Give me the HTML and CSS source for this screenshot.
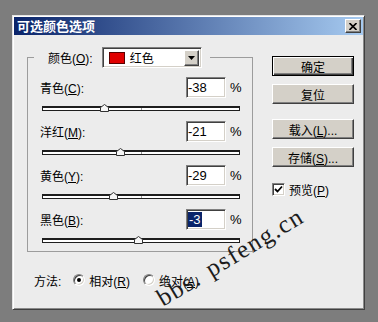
FILE: index.html
```html
<!DOCTYPE html>
<html lang="zh-CN">
<head>
    <meta charset="UTF-8">
    <meta name="viewport" content="width=device-width, initial-scale=1.0">
    <title>可选颜色选项</title>
    <link rel="stylesheet" href="styles.css">
</head>
<body>
    <div class="dialog">
        <div class="titlebar">
            <span class="title">可选颜色选项</span>
            <button class="close-btn">
                <svg width="8" height="7" viewBox="0 0 8 7"><path d="M0.5 0 L7.5 7 M7.5 0 L0.5 7" stroke="#000" stroke-width="1.6" fill="none"/></svg>
            </button>
        </div>

        <div class="dialog-body">
            <div class="left-col">
                <fieldset class="group">
                    <legend class="group-head">
                        <div class="head-inner">
                            <span class="label">颜色(<u>O</u>):</span>
                            <div class="dropdown">
                                <span class="swatch"></span>
                                <span class="dropdown-text">红色</span>
                                <span class="dropdown-arrow">
                                    <svg width="7" height="4" viewBox="0 0 7 4"><path d="M0 0 H7 L3.5 4 Z" fill="#000"/></svg>
                                </span>
                            </div>
                        </div>
                    </legend>

                    <div class="params">
                        <div class="param">
                            <div class="param-row">
                                <span class="label">青色(<u>C</u>):</span>
                                <span class="value-box">-38</span>
                                <span class="pct">%</span>
                            </div>
                            <div class="slider">
                                <div class="track">
                                    <span class="zero"></span>
                                    <span class="thumb" style="left: 31%"><svg width="9" height="8" viewBox="0 0 9 8"><path d="M0.5 7.5 V3.5 L4.5 0.5 L8.5 3.5 V7.5 Z" fill="#f6f6f6" stroke="#333"/></svg></span>
                                </div>
                            </div>
                        </div>
                        <div class="param">
                            <div class="param-row">
                                <span class="label">洋红(<u>M</u>):</span>
                                <span class="value-box">-21</span>
                                <span class="pct">%</span>
                            </div>
                            <div class="slider">
                                <div class="track">
                                    <span class="zero"></span>
                                    <span class="thumb" style="left: 39.5%"><svg width="9" height="8" viewBox="0 0 9 8"><path d="M0.5 7.5 V3.5 L4.5 0.5 L8.5 3.5 V7.5 Z" fill="#f6f6f6" stroke="#333"/></svg></span>
                                </div>
                            </div>
                        </div>
                        <div class="param">
                            <div class="param-row">
                                <span class="label">黄色(<u>Y</u>):</span>
                                <span class="value-box">-29</span>
                                <span class="pct">%</span>
                            </div>
                            <div class="slider">
                                <div class="track">
                                    <span class="zero"></span>
                                    <span class="thumb" style="left: 35.5%"><svg width="9" height="8" viewBox="0 0 9 8"><path d="M0.5 7.5 V3.5 L4.5 0.5 L8.5 3.5 V7.5 Z" fill="#f6f6f6" stroke="#333"/></svg></span>
                                </div>
                            </div>
                        </div>
                        <div class="param">
                            <div class="param-row">
                                <span class="label">黑色(<u>B</u>):</span>
                                <span class="value-box"><span class="selected">-3</span></span>
                                <span class="pct">%</span>
                            </div>
                            <div class="slider">
                                <div class="track">
                                    <span class="zero"></span>
                                    <span class="thumb" style="left: 48.5%"><svg width="9" height="8" viewBox="0 0 9 8"><path d="M0.5 7.5 V3.5 L4.5 0.5 L8.5 3.5 V7.5 Z" fill="#f6f6f6" stroke="#333"/></svg></span>
                                </div>
                            </div>
                        </div>
                    </div>
                </fieldset>

                <div class="method">
                    <span class="method-label">方法:</span>
                    <label class="radio-option">
                        <span class="radio checked"></span>
                        <span>相对(<u>R</u>)</span>
                    </label>
                    <label class="radio-option">
                        <span class="radio"></span>
                        <span>绝对(<u>A</u>)</span>
                    </label>
                </div>
            </div>

            <div class="right-col">
                <button class="btn default">确定</button>
                <button class="btn">复位</button>
                <button class="btn spaced">载入(<u>L</u>)...</button>
                <button class="btn">存储(<u>S</u>)...</button>
                <label class="check-option">
                    <span class="checkbox">
                        <svg width="9" height="9" viewBox="0 0 9 9"><path d="M1 4 L3.5 6.5 L8 1.5" stroke="#000" stroke-width="1.8" fill="none"/></svg>
                    </span>
                    <span>预览(<u>P</u>)</span>
                </label>
            </div>
        </div>
    </div>

    <div class="watermark">bbs. psfeng.cn</div>
</body>
</html>
```

FILE: styles.css
```css
* {
    margin: 0;
    padding: 0;
    box-sizing: border-box;
}

body {
    background-color: #7d7d7d;
    font-family: 'Liberation Sans', 'Noto Sans CJK SC', sans-serif;
    font-size: 12px;
    color: #000;
    position: relative;
    height: 322px;
    overflow: hidden;
}

u {
    text-decoration: underline;
    text-underline-offset: 1px;
}

.dialog {
    margin: 15px 0 0 12px;
    width: 353px;
    height: 295px;
    padding: 1px;
    background-color: #ececec;
    border: 1px solid;
    border-color: #e4e4e4 #404040 #404040 #e4e4e4;
    box-shadow: inset 1px 1px 0 #fff, inset -1px -1px 0 #8a8a8a;
}

/* title bar */
.titlebar {
    height: 18px;
    display: flex;
    align-items: center;
    justify-content: space-between;
    padding: 0 2px 0 3px;
    background: linear-gradient(to right, #0a246a, #a6caf0);
}

.title {
    color: #fff;
    font-weight: bold;
    font-size: 13px;
    font-family: 'Noto Sans CJK SC', sans-serif;
    line-height: 18px;
}

.close-btn {
    width: 16px;
    height: 14px;
    display: flex;
    align-items: center;
    justify-content: center;
    background-color: #d4d0c8;
    border: 1px solid;
    border-color: #fff #404040 #404040 #fff;
    box-shadow: inset -1px -1px 0 #808080;
}

/* body */
.dialog-body {
    display: flex;
    gap: 19px;
    padding: 12px 0 0 13px;
}

.left-col {
    width: 226px;
}

.group {
    border: 1px solid #9c9c9c;
    padding: 9px 11px 1px 12px;
    margin: 0;
    min-width: 0;
}

.group-head {
    margin-left: -6px;
    padding: 0 8px 0 14px;
}

.head-inner {
    display: flex;
    align-items: center;
    gap: 9px;
}

.dropdown {
    width: 100px;
    height: 21px;
    display: flex;
    align-items: center;
    background-color: #fff;
    border: 1px solid;
    border-color: #808080 #fff #fff #808080;
    box-shadow: inset 1px 1px 0 #404040, inset -1px -1px 0 #d4d0c8;
    padding: 0 2px 0 6px;
}

.swatch {
    width: 16px;
    height: 12px;
    background-color: #e00000;
    border: 1px solid #5a0000;
}

.dropdown-text {
    flex: 1;
    margin-left: 5px;
}

.dropdown-arrow {
    width: 15px;
    height: 16px;
    display: flex;
    align-items: center;
    justify-content: center;
    background-color: #d4d0c8;
    border: 1px solid;
    border-color: #fff #404040 #404040 #fff;
    box-shadow: inset -1px -1px 0 #808080;
}

.params {
    display: flex;
    flex-direction: column;
    gap: 3px;
}

.param-row {
    display: flex;
    align-items: center;
    height: 21px;
}

.param-row .label {
    flex: 1;
}

.value-box {
    width: 40px;
    height: 21px;
    background-color: #fff;
    border: 1px solid;
    border-color: #808080 #fff #fff #808080;
    box-shadow: inset 1px 1px 0 #404040, inset -1px -1px 0 #d4d0c8;
    padding: 1px 0 0 1px;
    font-size: 13px;
    line-height: 17px;
}

.selected {
    background-color: #0a246a;
    color: #fff;
    padding: 0 1px;
}

.pct {
    width: 11px;
    margin-left: 4px;
    font-size: 13px;
}

.slider {
    height: 20px;
    display: flex;
    align-items: center;
    padding: 0 1px 0 2px;
}

.track {
    position: relative;
    flex: 1;
    height: 5px;
    background-color: #fff;
    border: 1px solid #1e1e1e;
    border-top-width: 2px;
}

.zero {
    position: absolute;
    left: 50%;
    top: 0;
    width: 1px;
    height: 2px;
    background-color: #9a9a9a;
}

.thumb {
    position: absolute;
    bottom: -2px;
    width: 9px;
    height: 8px;
    margin-left: -4px;
    display: flex;
}

/* method row */
.method {
    display: flex;
    align-items: center;
    height: 16px;
    margin: 20px 0 0 7px;
}

.method-label {
    margin-right: 12px;
}

.radio-option {
    display: flex;
    align-items: center;
    gap: 4px;
    margin-right: 13px;
}

.radio {
    width: 12px;
    height: 12px;
    border-radius: 50%;
    background-color: #fff;
    border: 1px solid;
    border-color: #808080 #fff #fff #808080;
    box-shadow: inset 1px 1px 0 #404040, inset -1px -1px 0 #d4d0c8;
    display: flex;
    align-items: center;
    justify-content: center;
}

.radio.checked::after {
    content: '';
    width: 4px;
    height: 4px;
    border-radius: 50%;
    background-color: #000;
}

/* right column */
.right-col {
    display: flex;
    flex-direction: column;
    width: 82px;
    margin-top: 9px;
}

.btn {
    height: 20px;
    margin-bottom: 8px;
    font-family: 'Liberation Sans', 'Noto Sans CJK SC', sans-serif;
    font-size: 12px;
    color: #000;
    background-color: #d4d0c8;
    border: 1px solid;
    border-color: #fff #404040 #404040 #fff;
    box-shadow: inset -1px -1px 0 #808080;
}

.btn.default {
    border-color: #000;
    box-shadow: inset 1px 1px 0 #fff, inset -1px -1px 0 #404040, inset -2px -2px 0 #808080;
}

.btn.spaced {
    margin-top: 7px;
}

.check-option {
    display: flex;
    align-items: center;
    gap: 4px;
    margin-top: 6px;
}

.checkbox {
    width: 13px;
    height: 13px;
    display: flex;
    align-items: center;
    justify-content: center;
    background-color: #fff;
    border: 1px solid;
    border-color: #808080 #fff #fff #808080;
    box-shadow: inset 1px 1px 0 #404040, inset -1px -1px 0 #d4d0c8;
}

/* watermark stamped over the screenshot */
.watermark {
    position: absolute;
    left: 166px;
    top: 284px;
    transform-origin: 0 100%;
    transform: rotate(-31deg);
    font-family: 'Liberation Serif', serif;
    font-size: 25px;
    letter-spacing: 1.5px;
    word-spacing: 2px;
    color: #1c1c1c;
    white-space: nowrap;
}
```
